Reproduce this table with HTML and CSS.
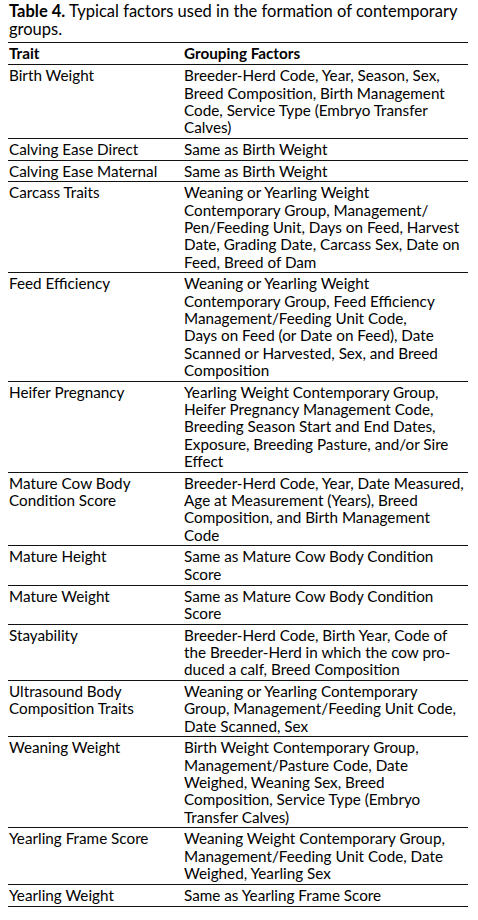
FILE: index.html
```html
<!DOCTYPE html>
<html lang="en">
<head>
<meta charset="utf-8">
<title>Table 4</title>
<link rel="stylesheet" href="styles.css">
</head>
<body>
<div class="doc">
  <p class="caption"><span class="cap-line"><b>Table 4.</b> Typical factors used in the formation of contemporary</span><span class="cap-line">groups.</span></p>
  <table class="factors">
    <thead>
      <tr><th class="trait">Trait</th><th class="group">Grouping Factors</th></tr>
    </thead>
    <tbody>
      <tr><td class="trait">Birth Weight</td><td class="group">Breeder-Herd Code, Year, Season, Sex,<br>Breed Composition, Birth Management<br>Code, Service Type (Embryo Transfer<br>Calves)</td></tr>
      <tr><td class="trait">Calving Ease Direct</td><td class="group">Same as Birth Weight</td></tr>
      <tr><td class="trait">Calving Ease Maternal</td><td class="group">Same as Birth Weight</td></tr>
      <tr><td class="trait">Carcass Traits</td><td class="group">Weaning or Yearling Weight<br>Contemporary Group, Management/<br>Pen/Feeding Unit, Days on Feed, Harvest<br>Date, Grading Date, Carcass Sex, Date on<br>Feed, Breed of Dam</td></tr>
      <tr><td class="trait">Feed Efficiency</td><td class="group">Weaning or Yearling Weight<br>Contemporary Group, Feed Efficiency<br>Management/Feeding Unit Code,<br>Days on Feed (or Date on Feed), Date<br>Scanned or Harvested, Sex, and Breed<br>Composition</td></tr>
      <tr><td class="trait">Heifer Pregnancy</td><td class="group">Yearling Weight Contemporary Group,<br>Heifer Pregnancy Management Code,<br>Breeding Season Start and End Dates,<br>Exposure, Breeding Pasture, and/or Sire<br>Effect</td></tr>
      <tr><td class="trait">Mature Cow Body<br>Condition Score</td><td class="group">Breeder-Herd Code, Year, Date Measured,<br>Age at Measurement (Years), Breed<br>Composition, and Birth Management<br>Code</td></tr>
      <tr><td class="trait">Mature Height</td><td class="group">Same as Mature Cow Body Condition<br>Score</td></tr>
      <tr><td class="trait">Mature Weight</td><td class="group">Same as Mature Cow Body Condition<br>Score</td></tr>
      <tr><td class="trait">Stayability</td><td class="group">Breeder-Herd Code, Birth Year, Code of<br>the Breeder-Herd in which the cow pro-<br>duced a calf, Breed Composition</td></tr>
      <tr><td class="trait">Ultrasound Body<br>Composition Traits</td><td class="group">Weaning or Yearling Contemporary<br>Group, Management/Feeding Unit Code,<br>Date Scanned, Sex</td></tr>
      <tr><td class="trait">Weaning Weight</td><td class="group">Birth Weight Contemporary Group,<br>Management/Pasture Code, Date<br>Weighed, Weaning Sex, Breed<br>Composition, Service Type (Embryo<br>Transfer Calves)</td></tr>
      <tr><td class="trait">Yearling Frame Score</td><td class="group">Weaning Weight Contemporary Group,<br>Management/Feeding Unit Code, Date<br>Weighed, Yearling Sex</td></tr>
      <tr><td class="trait">Yearling Weight</td><td class="group">Same as Yearling Frame Score</td></tr>
    </tbody>
  </table>
</div>
</body>
</html>
```

FILE: styles.css
```css
html, body {
  margin: 0;
  padding: 0;
  background: #ffffff;
}

body {
  font-family: Lato, "Open Sans", sans-serif;
  font-size: 15.25px;
  color: #000000;
}

.doc {
  width: 460px;
  padding: 3px 10px 0 8px;
}

.caption {
  margin: 0;
  padding: 0 0 4px 1px;
  font-size: 16.5px;
  line-height: 17.7px;
  white-space: nowrap;
}

.cap-line {
  display: block;
}

.caption b {
  font-weight: 700;
}

.factors {
  width: 460px;
  border-collapse: collapse;
  border-top: 1.5px solid #111;
}

.factors th,
.factors td {
  text-align: left;
  vertical-align: top;
  line-height: 17.3px;
  padding: 2px 0 1.5px 0;
  border-bottom: 1px solid #111;
  white-space: nowrap;
}

.factors th {
  font-weight: 700;
}

.factors .trait {
  width: 175px;
  padding-left: 1px;
}
```
